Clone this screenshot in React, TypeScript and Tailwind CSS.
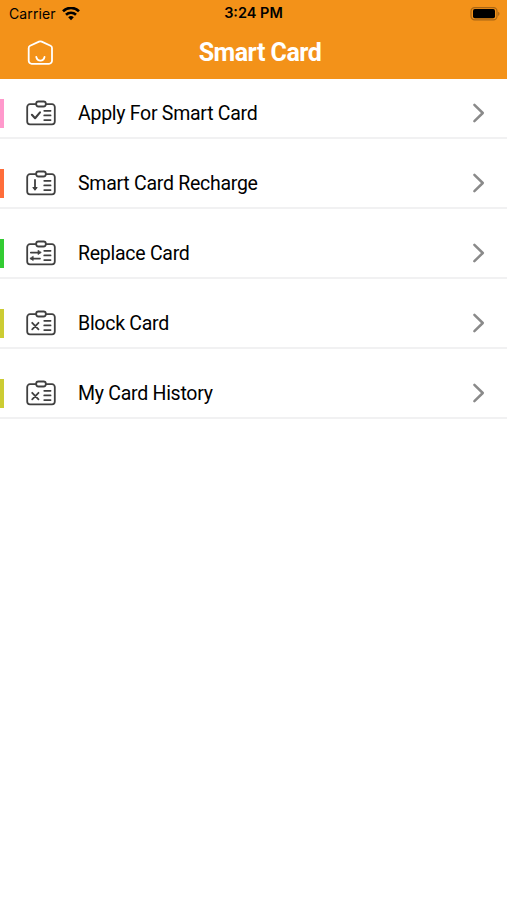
import React from "react";

interface MenuItem {
  title: string;
  bar: string;
  mark: React.ReactNode;
}

const crossMark = <path d="M6.2 12.8l6.3 6.6M12.5 12.8l-6.3 6.6" strokeWidth="1.8" />;

const items: MenuItem[] = [
  {
    title: "Apply For Smart Card",
    bar: "bg-[#ff99cc]",
    mark: <path d="M5.9 14.8l3.2 3.4 4.9-5.8" strokeWidth="2.1" />,
  },
  {
    title: "Smart Card Recharge",
    bar: "bg-[#ff6d3a]",
    mark: (
      <>
        <path d="M9 10v9" strokeWidth="1.8" />
        <path d="M7 17.5h4L9 20z" fill="currentColor" strokeWidth="1.2" />
      </>
    ),
  },
  {
    title: "Replace Card",
    bar: "bg-[#33cc33]",
    mark: (
      <>
        <path d="M4.8 12.6h9M14 18.6h-9" strokeWidth="1.7" />
        <path d="M12 10.6v4l3-2zM7.2 16.6v4l-3-2z" fill="currentColor" strokeWidth="0.7" />
      </>
    ),
  },
  { title: "Block Card", bar: "bg-[#cccc33]", mark: crossMark },
  { title: "My Card History", bar: "bg-[#cccc33]", mark: crossMark },
];

function CardIcon({ children }: { children: React.ReactNode }) {
  return (
    <svg
      width="30"
      height="26"
      viewBox="0 0 30 26"
      fill="none"
      stroke="currentColor"
      strokeWidth="1.8"
      strokeLinecap="round"
      strokeLinejoin="round"
      className="text-[#404040] shrink-0"
    >
      <path d="M10.2 4.2H4A2.8 2.8 0 0 0 1.2 7v14.6a2.8 2.8 0 0 0 2.8 2.8h22a2.8 2.8 0 0 0 2.8-2.8V7A2.8 2.8 0 0 0 26 4.2H19.8" />
      <rect x="10.2" y="1.5" width="9.6" height="5" rx="2.2" />
      <path d="M18.2 10.8h6.4M18.2 15.4h6.4M18.2 20.1h6.4" strokeWidth="1.7" />
      {children}
    </svg>
  );
}

function StatusBar() {
  return (
    <div className="h-[27px] grid grid-cols-3 items-center pl-[9px] pr-[7px] text-black font-['Inter',sans-serif]">
      <div className="flex items-center gap-[6px]">
        <span className="text-[14px] tracking-[0.1px] leading-none">Carrier</span>
        <svg width="18" height="14" viewBox="0 0 18 14" fill="none" stroke="currentColor" strokeWidth="2.6">
          <path d="M1 4.2a11.4 11.4 0 0 1 16 0" />
          <path d="M4 7.8a7.2 7.2 0 0 1 10 0" />
          <path d="M9 13.2L6.2 10.3a4 4 0 0 1 5.6 0z" fill="currentColor" stroke="none" />
        </svg>
      </div>
      <span className="text-center text-[14.5px] font-semibold leading-none -ml-0.5 pb-px">3:24 PM</span>
      <svg width="30" height="14" viewBox="0 0 30 14" className="justify-self-end">
        <rect x="1" y="0.6" width="26" height="12.2" rx="3.6" fill="none" stroke="#a86616" strokeWidth="1.2" />
        <rect x="3" y="2.1" width="22" height="9.2" rx="1.8" fill="#000" />
        <path d="M28.1 4.7v4.2c1.9-.7 1.9-3.5 0-4.2z" fill="#a86616" />
      </svg>
    </div>
  );
}

export default function App() {
  return (
    <div className="min-h-screen w-full bg-white font-['Roboto',sans-serif]">
      <header className="h-[79px] bg-[#f39219]">
        <StatusBar />
        <div className="h-[51px] grid grid-cols-[80px_1fr_67px] items-center text-white">
          <svg
            width="26"
            height="26"
            viewBox="0 0 26 26"
            fill="none"
            stroke="currentColor"
            strokeWidth="1.8"
            strokeLinecap="round"
            strokeLinejoin="round"
            className="ml-[27px]"
          >
            <path d="M12 1.6L3.1 5.8Q1.7 6.5 1.7 8V20.8a3 3 0 0 0 3 3H22a3 3 0 0 0 3-3V8Q25 6.5 23.6 5.8L14.7 1.6Q13.3 1 12 1.6z" />
            <path d="M9.3 17c.4 1.7 2.1 3.6 4.1 3.6s3.7-1.9 4.1-3.6" />
          </svg>
          <h1 className="text-center text-[25px] tracking-[-0.5px] font-bold leading-none">Smart Card</h1>
        </div>
      </header>

      <ul className="flex flex-col gap-5 pt-2.5">
        {items.map((item) => (
          <li key={item.title} className="h-[50px] flex items-center border-b-2 border-[#f1f1f2]">
            <span className={`w-1 h-[29px] mr-[22px] shrink-0 ${item.bar}`} />
            <CardIcon>{item.mark}</CardIcon>
            <span className="ml-[22px] pt-0.5 flex-1 text-[19.5px] tracking-[-0.27px] leading-6 text-black">
              {item.title}
            </span>
            <svg
              width="14"
              height="20"
              viewBox="0 0 14 20"
              fill="none"
              stroke="#8a8a8a"
              strokeWidth="2.5"
              strokeLinecap="round"
              strokeLinejoin="round"
              className="mr-[21px]"
            >
              <path d="M2.4 1.8l8.4 8.2-8.4 8.2" />
            </svg>
          </li>
        ))}
      </ul>
    </div>
  );
}
